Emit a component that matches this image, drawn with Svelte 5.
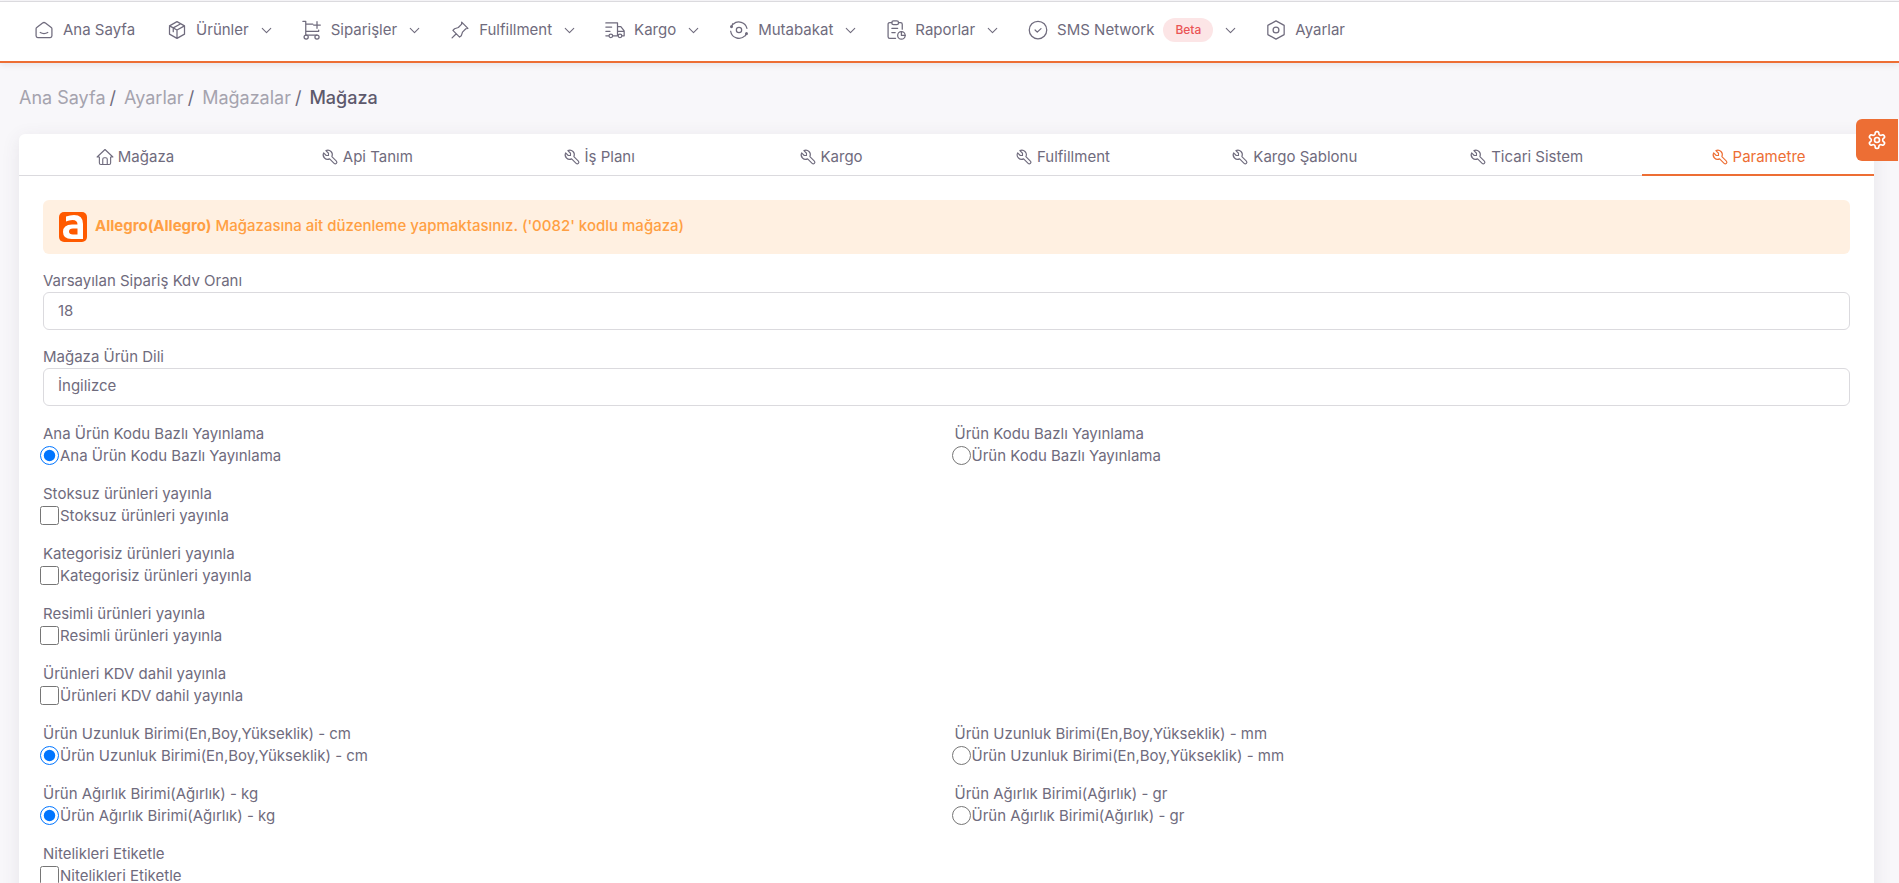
<script>
  const nav = [
    { label: 'Ana Sayfa', icon: 'home' },
    { label: 'Ürünler', icon: 'box', menu: true },
    { label: 'Siparişler', icon: 'cart', menu: true },
    { label: 'Fulfillment', icon: 'pin', menu: true },
    { label: 'Kargo', icon: 'truck', menu: true },
    { label: 'Mutabakat', icon: 'orbit', menu: true },
    { label: 'Raporlar', icon: 'report', menu: true },
    { label: 'SMS Network', icon: 'check', menu: true, badge: 'Beta' },
    { label: 'Ayarlar', icon: 'hex' },
  ];
  const crumbs = ['Ana Sayfa', 'Ayarlar', 'Mağazalar'];
  const tabs = ['Mağaza', 'Api Tanım', 'İş Planı', 'Kargo', 'Fulfillment', 'Kargo Şablonu', 'Ticari Sistem', 'Parametre'];
  let active = $state('Parametre');

  const fields = [
    { type: 'radio', options: ['Ana Ürün Kodu Bazlı Yayınlama', 'Ürün Kodu Bazlı Yayınlama'] },
    { type: 'checkbox', options: ['Stoksuz ürünleri yayınla'] },
    { type: 'checkbox', options: ['Kategorisiz ürünleri yayınla'] },
    { type: 'checkbox', options: ['Resimli ürünleri yayınla'] },
    { type: 'checkbox', options: ['Ürünleri KDV dahil yayınla'] },
    { type: 'radio', options: ['Ürün Uzunluk Birimi(En,Boy,Yükseklik) - cm', 'Ürün Uzunluk Birimi(En,Boy,Yükseklik) - mm'] },
    { type: 'radio', options: ['Ürün Ağırlık Birimi(Ağırlık) - kg', 'Ürün Ağırlık Birimi(Ağırlık) - gr'] },
    { type: 'checkbox', options: ['Nitelikleri Etiketle'] },
  ];
</script>

{#snippet icon(name)}
  <svg class="icon" viewBox="0 0 24 24" aria-hidden="true">
    {#if name === 'home'}
      <path d="M2.500 10.500q0-1 .8-1.600l7-5.300q1.700-1.200 3.400 0l7 5.300q.8.600.8 1.600v8.500a2 2 0 0 1-2 2h-15a2 2 0 0 1-2-2z" />
      <path d="M7.500 15q4.500 2.500 9 0" />
    {:else if name === 'box'}
      <path d="m12 2 9 5v10l-9 5-9-5V7zM3 7l9 5 9-5M12 12v10M7.500 14V9.500l9-5M7.500 9.500l9-5M3 7l4.500 2.500" />
    {:else if name === 'cart'}
      <circle cx="5" cy="20.500" r="2.500" /><circle cx="18" cy="20.500" r="2.500" />
      <path d="M1 1.500h3.500V18H18M4.500 5H13M4.500 13.500H20V12M18 2v8M14 6h8" />
    {:else if name === 'pin'}
      <path d="m14 2.500 7.500 7.500-2.500.5-4 4-1.500 4.500-2 1.500-8-8 2-2L10 9l4-4zM7.500 16.500 2.500 21.500" />
    {:else if name === 'truck'}
      <circle cx="7" cy="19" r="2.200" /><circle cx="18" cy="19" r="2.200" />
      <path d="M1 3.500h14V19H9.500M15 8h4l4 5v6h-2.500M15 13.500h8M1 8.500h7M1 13.500h5M1 19h3.500" />
    {:else if name === 'orbit'}
      <circle cx="12" cy="12" r="3.200" />
      <path d="M5 5a10 10 0 0 1 16.500 5M2 13.500A10 10 0 0 0 19 19M4.500 4.500 3 8.500M21 15.500 19.500 19" />
      <circle cx="3" cy="8" r="1" fill="currentColor" /><circle cx="21" cy="16.500" r="1" fill="currentColor" />
    {:else if name === 'report'}
      <path d="M11.500 22H4.500a2 2 0 0 1-2-2V5a2 2 0 0 1 2-2H7M15 3h2.500a2 2 0 0 1 2 2v6" />
      <rect x="7" y="1" width="8" height="4.500" rx="2" />
      <path d="M7 10h7M7 15h4" />
      <circle cx="18.500" cy="18.500" r="4.500" /><path d="M18.500 14v4.500H23" />
    {:else if name === 'check'}
      <circle cx="12" cy="12" r="10.500" /><path d="m8.500 12 2.600 2.500 4.500-4.200" />
    {:else if name === 'hex'}
      <path d="m12 1 9.800 5.500v11L12 23l-9.800-5.500v-11z" /><circle cx="12" cy="12" r="3.500" />
    {:else if name === 'house'}
      <path d="M4.500 12h-3L12 2l10.500 10h-3M4.500 12v8a2 2 0 0 0 2 2h11a2 2 0 0 0 2-2v-8M9 22v-7a2 2 0 0 1 2-2h2a2 2 0 0 1 2 2v7" />
    {:else if name === 'wrench'}
      <path d="M7 10h3V7L6.500 3.500a6 6 0 0 1 8 8l6 6a2 2 0 0 1-3 3l-6-6a6 6 0 0 1-8-8L7 10" />
    {:else if name === 'gear'}
      <path d="M12.220 2h-.44a2 2 0 0 0-2 2v.18a2 2 0 0 1-1 1.730l-.43.25a2 2 0 0 1-2 0l-.15-.08a2 2 0 0 0-2.730.73l-.22.38a2 2 0 0 0 .73 2.730l.15.1a2 2 0 0 1 1 1.720v.51a2 2 0 0 1-1 1.740l-.15.09a2 2 0 0 0-.73 2.730l.22.38a2 2 0 0 0 2.730.73l.15-.08a2 2 0 0 1 2 0l.43.25a2 2 0 0 1 1 1.730V20a2 2 0 0 0 2 2h.44a2 2 0 0 0 2-2v-.18a2 2 0 0 1 1-1.730l.43-.25a2 2 0 0 1 2 0l.15.08a2 2 0 0 0 2.730-.73l.22-.39a2 2 0 0 0-.73-2.730l-.15-.08a2 2 0 0 1-1-1.740v-.5a2 2 0 0 1 1-1.740l.15-.09a2 2 0 0 0 .73-2.730l-.22-.38a2 2 0 0 0-2.730-.73l-.15.08a2 2 0 0 1-2 0l-.43-.25a2 2 0 0 1-1-1.730V4a2 2 0 0 0-2-2z" />
      <circle cx="12" cy="12" r="3" />
    {:else if name === 'down'}
      <path d="m6 9 6 6 6-6" />
    {/if}
  </svg>
{/snippet}

<header>
  <nav aria-label="Ana menü">
    {#each nav as item}
      <a href="#top">
        {@render icon(item.icon)}
        <span>{item.label}</span>
        {#if item.badge}<span class="badge">{item.badge}</span>{/if}
        {#if item.menu}<span class="chevron">{@render icon('down')}</span>{/if}
      </a>
    {/each}
  </nav>
</header>

<main>
  <nav class="crumbs" aria-label="Sayfa yolu">
    {#each crumbs as crumb}<a href="#top">{crumb}</a><span class="slash">/</span>{/each}
    <strong>Mağaza</strong>
  </nav>

  <section class="card">
    <div class="tabs" role="tablist">
      {#each tabs as tab, i}
        <button type="button" role="tab" class:active={active === tab} aria-selected={active === tab} onclick={() => (active = tab)}>
          {@render icon(i === 0 ? 'house' : 'wrench')}{tab}
        </button>
      {/each}
    </div>

    <form>
      <div class="alert">
        <svg class="logo" viewBox="0 0 28 30" aria-hidden="true">
          <rect width="28" height="30" rx="5" fill="#ff5a00" />
          <path
            fill="#fff"
            fill-rule="evenodd"
            d="M7 4.500Q11 3 15 3q9 0 9 9v15H12.500Q4 27 4 20q0-7.500 9-7.500h5.500Q18.500 8 13.500 8 10 8 7 9.500zM18.500 16.500H14q-4 0-4 3t4 3h4.500z"
          />
        </svg>
        <p><b>Allegro(Allegro)</b> Mağazasına ait düzenleme yapmaktasınız. ('0082' kodlu mağaza)</p>
      </div>

      <div class="field">
        <label for="kdv">Varsayılan Sipariş Kdv Oranı</label>
        <input id="kdv" class="text" type="text" value="18" />
      </div>
      <div class="field">
        <label for="dil">Mağaza Ürün Dili</label>
        <select id="dil" class="text"><option>İngilizce</option></select>
      </div>

      {#each fields as field, row}
        <div class="choices">
          {#each field.options as option, i}
            <div class="choice">
              <span>{option}</span>
              <label>
                <input type={field.type} name="secim-{row}" checked={field.type === 'radio' && i === 0} />{option}
              </label>
            </div>
          {/each}
        </div>
      {/each}
    </form>
  </section>
</main>

<button type="button" class="customizer" aria-label="Görünüm ayarları">{@render icon('gear')}</button>

<style>
  :global(body) {
    background: #f8f7fa;
    color: #6f6b7d;
    font: 15px/22px Inter, sans-serif;
  }
  :global(html) { scrollbar-width: none; }
  :global(*) { box-sizing: border-box; }
  a { color: inherit; text-decoration: none; }
  button, input, select { font: inherit; color: inherit; }
  .icon {
    width: 20px;
    height: 20px;
    flex: none;
    fill: none;
    stroke: currentColor;
    stroke-width: 1.5;
    stroke-linecap: round;
    stroke-linejoin: round;
  }
  header {
    height: 62px;
    background: #fff;
    border-top: 1px solid #dbdade;
    border-bottom: 2px solid #ed6e34;
    box-shadow: 0 2px 6px #4b465c1a;
    margin-top: 1px;
  }
  header nav { display: flex; height: 56px; padding-left: 34px; gap: 32px; }
  header a { display: flex; align-items: center; gap: 9px; white-space: nowrap; }
  .chevron { display: flex; margin-right: -5px; }
  .chevron .icon { width: 17px; height: 17px; }
  .badge {
    padding: 0 12px;
    border-radius: 12px;
    background: #fce5e6;
    color: #ea5455;
    font-size: 12px;
    font-weight: 500;
    line-height: 24px;
  }
  main { padding: 21px 25px 0 19px; }
  .crumbs { display: flex; font-size: 18px; line-height: 28px; }
  .crumbs a { color: #a5a3ae; }
  .slash { margin: 0 8px 0 4px; }
  .crumbs strong { font-weight: 500; color: #5d596c; }
  .card {
    margin-top: 22px;
    padding-bottom: 24px;
    background: #fff;
    border-radius: 6px;
    box-shadow: 0 4px 18px #4b465c1a;
  }
  .tabs { display: grid; grid-template-columns: repeat(8, 1fr); box-shadow: inset 0 -1px #dbdade; }
  .tabs button {
    display: flex;
    align-items: center;
    justify-content: center;
    gap: 4px;
    height: 42px;
    padding: 6px 0 0;
    border: 0;
    border-bottom: 2px solid transparent;
    background: none;
  }
  .tabs .icon { width: 18px; height: 18px; }
  .tabs .active { color: #ed6e34; border-color: #ed6e34; }
  form { padding: 24px; }
  .alert {
    display: flex;
    align-items: center;
    gap: 8px;
    height: 54px;
    padding: 0 16px;
    border-radius: 6px;
    background: #fff0e1;
    color: #ff9f43;
    font-weight: 500;
  }
  .alert p { margin: 0 0 2px; }
  .alert b { font-weight: 700; }
  .logo { width: 28px; height: 30px; }
  .field { display: flex; flex-direction: column; margin-top: 16px; }
  .text {
    appearance: none;
    width: 100%;
    height: 38px;
    padding: 0 14px 2px;
    border: 1px solid #dbdade;
    border-radius: 6px;
    background: #fff;
  }
  .choices { display: grid; grid-template-columns: 1fr 1fr; column-gap: 16px; margin-top: 16px; }
  .field + .choices { margin-top: 17px; }
  .choice { display: flex; flex-direction: column; }
  .choice label { display: flex; align-items: center; }
  .choice input { width: 19px; height: 19px; margin: 0 1px 2px -3px; flex: none; }
  .customizer {
    position: fixed;
    top: 119px;
    right: 1px;
    display: grid;
    place-items: center;
    width: 42px;
    height: 42px;
    padding: 0;
    border: 0;
    border-radius: 6px 0 0 6px;
    background: #ed6e34;
    color: #fff;
  }
  .customizer .icon { stroke-width: 2; }
</style>
